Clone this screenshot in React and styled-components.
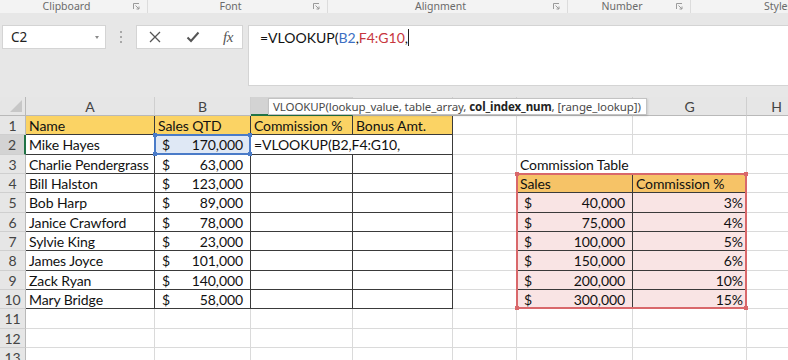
import React from 'react';
import styled, { createGlobalStyle, css } from 'styled-components';

const GlobalStyle = createGlobalStyle`
  html, body {
    margin: 0;
    padding: 0;
    background: #e7e7e7;
  }
  body {
    width: 788px;
    height: 360px;
    overflow: hidden;
    font-family: Lato, "Liberation Sans", sans-serif;
  }
`;

const COLS = [26, 129, 96, 102, 100, 64, 116, 114, 60];
const ROW_H = 19.33;
const HEAD_H = 19;

const UI_FONT = `"Noto Sans", "Open Sans", sans-serif`;
const CELL_FONT = `Lato, "Liberation Sans", sans-serif`;

const Window = styled.div`
  width: 788px;
  height: 360px;
  overflow: hidden;
  display: flex;
  flex-direction: column;
  background: #e7e7e7;

  & > * {
    flex: none;
  }
`;

/* ribbon group captions */
const RibbonLabels = styled.div`
  display: flex;
  height: 13px;
  background: #f3f3f3;
  font-family: ${UI_FONT};
  font-size: 10.5px;
  color: #6a6a6a;
  line-height: 13px;
`;

const Group = styled.div`
  width: ${({ $w }) => $w}px;
  flex: ${({ $w }) => ($w ? 'none' : 1)};
  display: flex;
  align-items: flex-start;
  border-right: ${({ $last }) => ($last ? 'none' : '1px solid #dcdcdc')};
  height: 13px;
  box-sizing: border-box;
  padding-right: ${({ $last }) => ($last ? 0 : 7)}px;

  span {
    flex: 1;
    text-align: ${({ $last }) => ($last ? 'left' : 'center')};
    padding-left: ${({ $last }) => ($last ? 73 : 0)}px;
    white-space: nowrap;
  }
`;

const Launcher = () => (
  <svg width="7" height="7" viewBox="0 0 7 7" style={{ marginTop: 3 }}>
    <path d="M0.5 6V0.5H6" fill="none" stroke="#9a9a9a" strokeWidth="1" />
    <path d="M2.5 2.5L6 6M6 3.5V6H3.5" fill="none" stroke="#9a9a9a" strokeWidth="1" />
  </svg>
);

/* formula bar */
const FormulaArea = styled.div`
  display: flex;
  align-items: flex-start;
  height: 84px;
  box-sizing: border-box;
  padding: 12px 0 0 2px;
`;

const NameBox = styled.div`
  width: 104px;
  height: 24px;
  box-sizing: border-box;
  background: #fff;
  border: 1px solid #d4d4d4;
  display: flex;
  align-items: center;
  justify-content: space-between;
  padding: 0 6px 0 8px;
  font-family: ${UI_FONT};
  font-size: 13.5px;
  color: #222;
`;

const Caret = styled.span`
  width: 0;
  height: 0;
  border-left: 2.5px solid transparent;
  border-right: 2.5px solid transparent;
  border-top: 3px solid #8a8a8a;
`;

const Grip = styled.div`
  width: 30px;
  height: 24px;
  display: flex;
  flex-direction: column;
  align-items: center;
  justify-content: center;
  gap: 3px;

  i {
    width: 2px;
    height: 2px;
    background: #a8a8a8;
  }
`;

const ButtonBox = styled.div`
  width: 107px;
  height: 24px;
  box-sizing: border-box;
  background: #fff;
  border: 1px solid #d4d4d4;
  display: flex;
  align-items: center;
  padding-left: 11px;
  margin-right: 5px;
`;

const BarButton = styled.span`
  width: ${({ $w }) => $w}px;
  margin-left: ${({ $ml }) => $ml || 0}px;
  display: flex;
  align-items: center;
  justify-content: center;
`;

const Fx = styled.span`
  font-family: "Liberation Serif", serif;
  font-style: italic;
  font-size: 15px;
  color: #555;
  letter-spacing: -0.5px;
`;

const FormulaInput = styled.div`
  flex: 1;
  height: 61px;
  box-sizing: border-box;
  background: #fff;
  border: 1px solid #d4d4d4;
  border-right: none;
  padding: 2px 0 0 11px;
  font-family: ${CELL_FONT};
  font-size: 14px;
  line-height: 20px;
  color: #111;
`;

const Ref = styled.span`
  color: ${({ $c }) => $c};
`;

const TextCursor = styled.span`
  display: inline-block;
  width: 1px;
  height: 17px;
  background: #222;
  vertical-align: -3px;
`;

/* sheet */
const Sheet = styled.div`
  position: relative;
  display: grid;
  grid-template-columns: ${COLS.map((c) => `${c}px`).join(' ')};
  grid-template-rows: ${HEAD_H}px;
  grid-auto-rows: ${ROW_H}px;
  background: #fff;
  font-family: ${CELL_FONT};
  font-size: 14px;
  letter-spacing: -0.1px;
  color: #111;
`;

const ColHead = styled.div`
  background: ${({ $active }) => ($active ? '#d3d3d3' : '#e6e6e6')};
  border-right: 1px solid #cfcfcf;
  border-bottom: ${({ $active }) => ($active ? '2px solid #217346' : '1px solid #b9b9b9')};
  box-sizing: border-box;
  display: flex;
  align-items: center;
  justify-content: center;
  color: #444;
  font-size: 14px;
`;

const Corner = styled.div`
  background: #e6e6e6;
  border-right: 1px solid #b9b9b9;
  border-bottom: 1px solid #b9b9b9;
  box-sizing: border-box;
  position: relative;

  &::after {
    content: '';
    position: absolute;
    right: 3px;
    bottom: 3px;
    border-left: 12px solid transparent;
    border-bottom: 12px solid #c7c7c7;
  }
`;

const RowHead = styled.div`
  background: ${({ $active }) => ($active ? '#d3d3d3' : '#e6e6e6')};
  border-right: ${({ $active }) => ($active ? '2px solid #217346' : '1px solid #b9b9b9')};
  border-bottom: 1px solid #cfcfcf;
  box-sizing: border-box;
  display: flex;
  align-items: center;
  justify-content: center;
  color: #444;
  font-size: 14px;
  padding-top: 1px;
`;

const Cell = styled.div`
  box-sizing: border-box;
  background: ${({ $fill }) => $fill || '#fff'};
  border-right: 1px solid ${({ $br }) => $br || '#dadada'};
  border-bottom: 1px solid ${({ $bb }) => $bb || '#dadada'};
  display: flex;
  align-items: center;
  padding: 1px 3px 0;
  white-space: nowrap;
  overflow: visible;
  grid-column: ${({ $span }) => ($span ? `span ${$span}` : 'auto')};
  justify-content: ${({ $right }) => ($right ? 'flex-end' : 'flex-start')};

  ${({ $acct }) =>
    $acct &&
    css`
      justify-content: space-between;
      padding: 1px 7px 0 7px;
    `}
`;

const RefBox = styled.div`
  position: absolute;
  pointer-events: none;
  box-sizing: border-box;
  border: 2px solid ${({ $c }) => $c};

  i {
    position: absolute;
    width: 4px;
    height: 4px;
    background: ${({ $c }) => $c};
  }
`;

const Tip = styled.div`
  position: absolute;
  left: 268px;
  top: 1px;
  width: 379px;
  height: 17px;
  box-sizing: border-box;
  background: #fff;
  border: 1px solid #c3c3c3;
  box-shadow: 1px 1px 2px rgba(0, 0, 0, 0.12);
  font-family: ${UI_FONT};
  font-size: 11.5px;
  line-height: 15px;
  color: #4a4a4a;
  padding-left: 4px;
  white-space: nowrap;

  b {
    color: #222;
  }
`;

const YELLOW = '#fbd364';
const ORANGE = '#f6c367';
const PINK = '#f9e4e4';
const BLUE_FILL = '#dfe8f5';
const DARK = '#3a3a3a';

const people = [
  ['Mike Hayes', '170,000'],
  ['Charlie Pendergrass', '63,000'],
  ['Bill Halston', '123,000'],
  ['Bob Harp', '89,000'],
  ['Janice Crawford', '78,000'],
  ['Sylvie King', '23,000'],
  ['James Joyce', '101,000'],
  ['Zack Ryan', '140,000'],
  ['Mary Bridge', '58,000'],
];

const rates = [
  ['40,000', '3%'],
  ['75,000', '4%'],
  ['100,000', '5%'],
  ['150,000', '6%'],
  ['200,000', '10%'],
  ['300,000', '15%'],
];

// column letters hidden under the function tooltip are left blank
const headers = ['A', 'B', '', '', '', '', 'G', 'H'];

const Acct = ({ value, ...rest }) => (
  <Cell $acct {...rest}>
    <span>$</span>
    <span>{value}</span>
  </Cell>
);

function buildRow(r) {
  const cells = [];
  const inTable = r <= 10;
  const dk = inTable ? { $br: DARK, $bb: DARK } : {};
  const person = people[r - 2];

  cells.push(
    <RowHead key="h" $active={r === 2}>
      {r}
    </RowHead>
  );

  // A, B
  if (r === 1) {
    cells.push(<Cell key="a" $fill={YELLOW} {...dk}>Name</Cell>);
    cells.push(<Cell key="b" $fill={YELLOW} {...dk}>Sales QTD</Cell>);
  } else if (person) {
    cells.push(<Cell key="a" {...dk}>{person[0]}</Cell>);
    cells.push(<Acct key="b" value={person[1]} $fill={r === 2 ? BLUE_FILL : undefined} {...dk} />);
  } else {
    cells.push(<Cell key="a" />, <Cell key="b" />);
  }

  // C, D
  if (r === 1) {
    cells.push(<Cell key="c" $fill={YELLOW} {...dk}>Commission %</Cell>);
    cells.push(<Cell key="d" $fill={YELLOW} {...dk}>Bonus Amt.</Cell>);
  } else if (r === 2) {
    cells.push(
      <Cell key="c" $span={2} {...dk}>
        =VLOOKUP(B2,F4:G10,
      </Cell>
    );
  } else {
    cells.push(<Cell key="c" {...dk} />, <Cell key="d" {...dk} />);
  }

  cells.push(<Cell key="e" />);

  // F, G
  const rate = rates[r - 5];
  if (r === 3) {
    cells.push(<Cell key="f" $br="#fff">Commission Table</Cell>, <Cell key="g" />);
  } else if (r === 4) {
    cells.push(<Cell key="f" $fill={ORANGE} $br={DARK} $bb={DARK}>Sales</Cell>);
    cells.push(<Cell key="g" $fill={ORANGE} $bb={DARK}>Commission %</Cell>);
  } else if (rate) {
    cells.push(<Acct key="f" value={rate[0]} $fill={PINK} $br={DARK} $bb={DARK} />);
    cells.push(
      <Cell key="g" $fill={PINK} $bb={DARK} $right>
        {rate[1]}
      </Cell>
    );
  } else {
    cells.push(<Cell key="f" />, <Cell key="g" />);
  }

  cells.push(<Cell key="hcol" />);
  return <React.Fragment key={r}>{cells}</React.Fragment>;
}

const Corners = () => (
  <>
    <i style={{ left: -3, top: -3 }} />
    <i style={{ right: -3, top: -3 }} />
    <i style={{ left: -3, bottom: -3 }} />
    <i style={{ right: -3, bottom: -3 }} />
  </>
);

const ribbonGroups = [
  { label: 'Clipboard', w: 148 },
  { label: 'Font', w: 180 },
  { label: 'Alignment', w: 240 },
  { label: 'Number', w: 123 },
];

const colLeft = (i) => COLS.slice(0, i).reduce((a, b) => a + b, 0);

export default function App() {
  const rowTop = (r) => HEAD_H + (r - 1) * ROW_H;

  return (
    <>
      <GlobalStyle />
      <Window>
        <RibbonLabels>
          {ribbonGroups.map((g) => (
            <Group key={g.label} $w={g.w}>
              <span>{g.label}</span>
              <Launcher />
            </Group>
          ))}
          <Group $last>
            <span>Styles</span>
          </Group>
        </RibbonLabels>

        <FormulaArea>
          <NameBox>
            C2
            <Caret />
          </NameBox>
          <Grip>
            <i />
            <i />
            <i />
          </Grip>
          <ButtonBox>
            <BarButton $w={14}>
              <svg width="12" height="12" viewBox="0 0 12 12">
                <path d="M1 1L11 11M11 1L1 11" stroke="#555" strokeWidth="1.3" />
              </svg>
            </BarButton>
            <BarButton $w={38} $ml={12}>
              <svg width="14" height="12" viewBox="0 0 14 12">
                <path d="M1.5 6.5L5 10L12.5 1.5" fill="none" stroke="#555" strokeWidth="2" />
              </svg>
            </BarButton>
            <BarButton $w={20} $ml={6}>
              <Fx>fx</Fx>
            </BarButton>
          </ButtonBox>
          <FormulaInput>
            =VLOOKUP(<Ref $c="#3d6fc3">B2</Ref>,<Ref $c="#c7363e">F4:G10</Ref>,
            <TextCursor />
          </FormulaInput>
        </FormulaArea>

        <Sheet>
          <Corner />
          {headers.map((l, i) => (
            <ColHead key={i} $active={i === 2}>
              {l}
            </ColHead>
          ))}
          {Array.from({ length: 13 }, (_, i) => buildRow(i + 1))}

          <RefBox
            $c="#4a7bc8"
            style={{ left: colLeft(2) - 1, top: rowTop(2) - 1, width: COLS[2] + 1, height: ROW_H + 1 }}
          >
            <Corners />
          </RefBox>
          <RefBox
            $c="#d9686b"
            style={{ left: colLeft(6) - 1, top: rowTop(4) - 1, width: COLS[6] + COLS[7] + 1, height: ROW_H * 7 + 1 }}
          >
            <Corners />
          </RefBox>

          <Tip>
            VLOOKUP(lookup_value, table_array, <b>col_index_num</b>, [range_lookup])
          </Tip>
        </Sheet>
      </Window>
    </>
  );
}
